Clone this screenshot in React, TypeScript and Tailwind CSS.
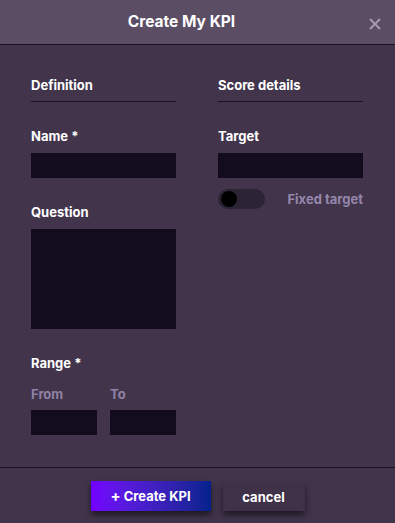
import React from "react";

const label = "font-['Inter',sans-serif] font-bold text-[13px] leading-[16px] text-white";
const sub = "font-['Inter',sans-serif] font-bold text-[13px] leading-[16px] text-[#8f82a4]";
const input = "block w-full h-[25px] bg-[#130c1d] border-0 outline-none";

export default function App() {
  return (
    <div className="w-[395px] min-h-[523px] bg-[#41344b] font-['Inter',sans-serif] flex flex-col">
      <div className="relative h-[45px] bg-[#5b4d64] border-b border-[#1a1320] flex items-center justify-center pr-[32px]">
        <div className="text-[15.5px] leading-[18px] font-bold text-white">Create My KPI</div>
        <button className="absolute left-[369px] top-[18px] w-[12px] h-[12px] flex items-center justify-center">
          <svg width="12" height="12" viewBox="0 0 12 12">
            <path d="M1 1 L11 11 M11 1 L1 11" stroke="#a29ba9" strokeWidth="2" strokeLinecap="butt" />
          </svg>
        </button>
      </div>

      <div className="pt-[32px] pl-[31px] grid grid-cols-[145px_145px] gap-x-[42px]">
        <div className="flex flex-col">
          <div className={`${label} pb-[8px] border-b border-[#1a1320]`}>Definition</div>
          <div className={`${label} mt-[26px]`}>Name *</div>
          <input className={`${input} mt-[9px]`} />
          <div className={`${label} mt-[26px]`}>Question</div>
          <textarea className="block w-full h-[100px] mt-[9px] bg-[#130c1d] border-0 outline-none resize-none" />
          <div className={`${label} mt-[26px]`}>Range *</div>
          <div className="mt-[15px] grid grid-cols-[66px_66px] gap-x-[13px]">
            <div className="flex flex-col">
              <div className={sub}>From</div>
              <input className={`${input} mt-[8px]`} />
            </div>
            <div className="flex flex-col">
              <div className={sub}>To</div>
              <input className={`${input} mt-[8px]`} />
            </div>
          </div>
        </div>
        <div className="flex flex-col">
          <div className={`${label} pb-[8px] border-b border-[#1a1320]`}>Score details</div>
          <div className={`${label} mt-[26px]`}>Target</div>
          <input className={`${input} mt-[9px]`} />
          <div className="mt-[11px] flex items-center justify-between">
            <div className="relative w-[47px] h-[20px] rounded-full bg-[#2c2334]">
              <div className="absolute left-[3px] top-[2px] w-[16px] h-[16px] rounded-full bg-black" />
            </div>
            <div className={`${sub} text-[#9587ab]`}>Fixed target</div>
          </div>
        </div>
      </div>

      <div className="mt-[32px] border-t border-[#1a1320] pt-[13px] pb-[12px] flex items-end justify-center gap-[12px]">
        <button className="w-[120px] h-[30px] bg-gradient-to-r from-[#7300ff] to-[#00228c] text-white font-bold text-[13px] leading-[16px] shadow-[0_4px_6px_rgba(0,0,0,0.55)]">
          <span className="text-[15px]">+</span> Create KPI
        </button>
        <button className="w-[82px] h-[28px] bg-[#3e3148] text-white font-bold text-[13px] leading-[16px] shadow-[0_4px_6px_rgba(0,0,0,0.55)]">
          cancel
        </button>
      </div>
    </div>
  );
}
